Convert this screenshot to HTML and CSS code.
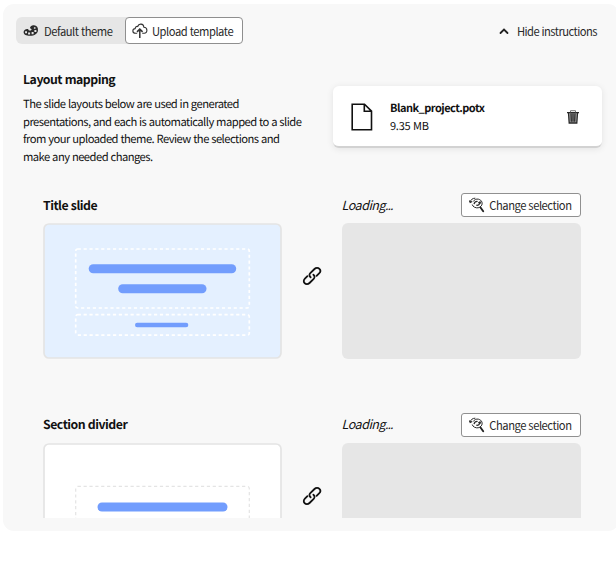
FILE: index.html
```html
<!DOCTYPE html>
<html lang="en">
<head>
<meta charset="utf-8">
<title>Layout mapping</title>
<link rel="stylesheet" href="styles.css">
</head>
<body>
<svg class="defs" width="0" height="0">
  <symbol id="link" viewBox="0 0 20 20">
    <g fill="none" stroke="#111" stroke-width="1.800" stroke-linecap="round">
      <path d="M8.600 11.300C7 9.900 7.200 8.300 8.300 7.200L12.500 3C14 1.500 16.200 1.600 17.400 2.800S18.500 6 17.100 7.400L14.600 9.900"/>
      <path d="M11.400 8.700C13 10.100 12.800 11.700 11.700 12.800L7.500 17C6 18.500 3.800 18.400 2.600 17.200S1.500 14 2.900 12.600L5.400 10.100"/>
    </g>
  </symbol>
  <symbol id="swap" viewBox="0 0 16 16">
    <g fill="none" stroke="#292929" stroke-width="1">
      <path d="M1.200 4.800C2 2.500 3.600 1.200 6.300 1.200M4.300 4.500C5.300 2.600 7.300 1.700 9.500 2.200C12.900 3 14.100 6.400 12.300 8.900C10.700 11 7.800 11.400 5.500 10.200C4.300 9.500 3.500 8.700 3.200 7.500"/>
      <path stroke-width="1.200" d="M.3 3.500L1.200 5.400L3.200 4.500M5 7.200C5.500 5.300 6.800 4.300 8.600 4.500M11 5.200C10.800 7.400 9.300 8.600 7.300 8.200M9.300 6L11 4.900L11.700 6.500"/>
    </g>
    <path d="M11.500 10.500L14.200 14.300" stroke="#222" stroke-width="1.900" stroke-linecap="round"/>
  </symbol>
</svg>
<main class="panel">
  <header class="toolbar">
    <div class="toggle">
      <button class="tab tab-default">
        <svg width="16" height="14" viewBox="0 0 16 14"><path fill="#292929" fill-rule="evenodd" d="M7 3.700C7.500 1.800 9 .9 11 1.200C13.800 1.500 15.200 3.500 15 6.200C14.800 9.700 11.500 11.800 7 11.800C3.200 11.800.7 10.500.6 8.200C.5 6 2.500 4.700 4.700 4.900C5.700 5 5.300 6.300 6.300 6.500C7.900 6.800 9 5.800 8.400 5C7.900 4.500 6.900 4.500 7 3.700ZM2.100 7.300V9.300H4V7.300ZM5.100 8.500V10.600H7.100V8.500ZM8.600 8.100V10.200H10.600V8.100ZM11.400 6V8H13.400V6ZM10.900 3.200V4.700H12.500V3.200Z"/></svg>
        <span>Default theme</span>
      </button>
      <button class="tab tab-upload">
        <svg width="16" height="16" viewBox="0 0 16 16" fill="none" stroke="#333" stroke-width="1.100"><path d="M5.200 10.300H3.700C0 10.300 0 6 3.200 5.600C3.200 3.800 4.700 3.100 5.700 3.500C6.700.2 11.600.3 11.900 4.300C15.800 4.300 15.900 10.300 12.200 10.300H10.200"/><path stroke-width="1.500" d="M7.800 15V6.300M5 8.900L7.800 6.100L10.600 8.900"/></svg>
        <span>Upload template</span>
      </button>
    </div>
    <button class="hide">
      <svg width="10" height="8" viewBox="0 0 10 8"><path d="M1.500 6L5 2.500L8.500 6" fill="none" stroke="#222" stroke-width="1.800" stroke-linecap="round"/></svg>
      <span>Hide instructions</span>
    </button>
  </header>
  <section class="intro">
    <div class="copy">
      <h1>Layout mapping</h1>
      <p>The slide layouts below are used in generated<br>presentations, and each is automatically mapped to a slide<br>from your uploaded theme. Review the selections and<br>make any needed changes.</p>
    </div>
    <div class="file">
      <svg width="22" height="28" viewBox="0 0 22 28"><path d="M1.200 1.200H13.500L20.500 8.200V26.800H1.200ZM13.300 1.200V8.300H20.500" fill="none" stroke="#111" stroke-width="1.600"/></svg>
      <div class="meta"><b>Blank_project.potx</b><span>9.35 MB</span></div>
      <svg class="trash" width="14" height="16" viewBox="0 0 14 16" fill="none" stroke="#292929"><path d="M2.400 4H11.600L10.900 14H3.100Z" fill="#aaa" stroke="none"/><path d="M1 3.700H13M2.500 4L3.200 14H10.800L11.500 4M5 4.500L5.300 12.800M7 4.500V12.800M9 4.500L8.700 12.800" stroke-width="1.300"/><path d="M4.500 3.300V1.700H9.500V3.300" stroke="#777"/></svg>
    </div>
  </section>
  <section class="rows">
    <article class="row">
      <div class="side">
        <h2>Title slide</h2>
        <svg class="thumb" viewBox="0 0 239 136">
          <rect x="1" y="1" width="237" height="134" rx="5" fill="#e4f0ff" stroke="#e4e4e4" stroke-width="1.700"/>
          <g fill="none" stroke="#fff" stroke-width="1.700" stroke-dasharray="3.200 2.670"><rect x="32.700" y="26" width="173.600" height="59" rx="2"/><rect x="32.700" y="91.700" width="173.600" height="20.500" rx="2"/></g>
          <g fill="#729dfd"><rect x="45.700" y="41.300" width="147.500" height="9" rx="4.500"/><rect x="75.200" y="61.200" width="88.300" height="9" rx="4.500"/><rect x="92" y="99.700" width="53.300" height="4.500" rx="2.200"/></g>
        </svg>
      </div>
      <svg class="link"><use href="#link"/></svg>
      <div class="side">
        <div class="head"><em>Loading<span>...</span></em><button class="change"><svg width="16" height="16"><use href="#swap"/></svg><span>Change selection</span></button></div>
        <div class="placeholder"></div>
      </div>
    </article>
    <article class="row">
      <div class="side">
        <h2>Section divider</h2>
        <svg class="thumb" viewBox="0 0 239 136">
          <rect x="1" y="1" width="237" height="134" rx="5" fill="#fff" stroke="#e4e4e4" stroke-width="1.700"/>
          <rect x="32.700" y="43.400" width="173.600" height="49" rx="2" fill="none" stroke="#e4e4e4" stroke-width="1.200" stroke-dasharray="3.200 2.670"/>
          <rect x="54.500" y="59.500" width="130" height="9" rx="4.500" fill="#729dfd"/>
        </svg>
      </div>
      <svg class="link"><use href="#link"/></svg>
      <div class="side">
        <div class="head"><em>Loading<span>...</span></em><button class="change"><svg width="16" height="16"><use href="#swap"/></svg><span>Change selection</span></button></div>
        <div class="placeholder"></div>
      </div>
    </article>
  </section>
</main>
</body>
</html>
```
FILE: styles.css
```css
* { box-sizing: border-box; }
body { margin: 0; overflow: hidden; background: #fff; color: #111; font: 11.200px/18px "Noto Sans CJK SC", sans-serif; letter-spacing: -.52px; word-spacing: .4px; white-space: nowrap; text-rendering: geometricPrecision; }
svg { flex: none; display: block; }
.defs { display: none; }
button { font: inherit; letter-spacing: -.46px; word-spacing: inherit; color: #292929; display: flex; align-items: center; border: 0; background: none; padding: 0; margin: 0; }
.panel { margin: 4px 0 0 3px; width: 616px; height: 527px; border-radius: 11px; background: #f8f8f8; padding: 13px 0 0; }
.toolbar { display: flex; justify-content: space-between; padding: 0 22px 0 13px; height: 27px; }
.toggle { display: flex; background: #e6e6e6; border-radius: 6px; }
.tab { height: 27px; gap: 5px; }
.tab-default { width: 109px; padding-left: 7px; }
.tab-upload { width: 118px; padding-left: 6px; gap: 4px; background: #fff; border: 1px solid #8f8f8f; border-radius: 4px; }
.hide { gap: 8px; letter-spacing: -.54px; }
.intro { display: flex; height: 137px; padding: 26px 0 0 20px; }
.copy { width: 310px; }
h1, h2 { margin: 0; font-size: 12.300px; line-height: 18px; font-weight: 700; letter-spacing: -.5px; }
p { margin: 8px 0 0; line-height: 17.667px; }
.file { width: 269px; height: 62px; margin-top: 16px; display: flex; align-items: center; padding: 2px 22px 0 18px; background: #fff; border-bottom: 2px solid #d2d2d2; border-radius: 6px; box-shadow: 0 1px 7px rgba(0,0,0,.09); }
.meta { display: flex; flex-direction: column; margin-left: 17px; font-size: 11px; }
.meta span { letter-spacing: -.25px; }
.trash { margin-left: auto; }
.rows { height: 336.500px; padding: 12px 0 0 40px; overflow: hidden; }
.row { display: flex; height: 166px; margin-bottom: 53.670px; }
.side { width: 239px; }
.side h2 { height: 30px; padding-top: 2.500px; }
.thumb { width: 239px; height: 136px; }
.link { width: 20px; height: 20px; margin: 73px 20.500px 0 19.800px; }
.head { height: 30px; display: flex; justify-content: space-between; align-items: flex-start; }
.head em { font-size: 12.500px; padding-top: 2.500px; margin-left: -.7px; letter-spacing: -.5px; }
.head em span { letter-spacing: -1px; }
.change { width: 120px; height: 24px; gap: 4px; padding-left: 7px; background: #fff; border: 1px solid #909090; border-radius: 3px; }
.placeholder { height: 136px; border-radius: 6px; background: #e6e6e6; }
```
